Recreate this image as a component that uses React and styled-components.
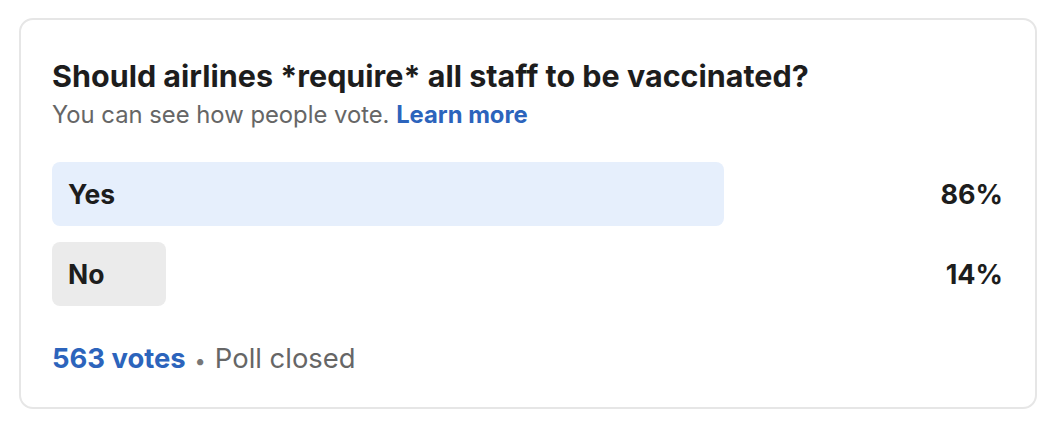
import React from 'react';
import styled, { createGlobalStyle } from 'styled-components';

const GlobalStyle = createGlobalStyle`
    body {
        margin: 0;
        background: #ffffff;
        font-family: Inter, "Liberation Sans", Arial, sans-serif;
    }
`

const Page = styled.div`
    padding: 18px 19px;
`

const Card = styled.div`
    box-sizing: border-box;
    width: 1018px;
    height: 391px;
    border: 2px solid #e6e6e6;
    border-radius: 14px;
    padding: 38px 32px 0 31px;
`

const Title = styled.h2`
    margin: 0;
    font-size: 30.5px;
    line-height: 36px;
    font-weight: 700;
    color: #1d1d1d;
`

const Subtitle = styled.p`
    margin: 6px 0 0;
    font-size: 23.8px;
    line-height: 30px;
    color: #666666;
`

const Link = styled.span`
    color: #2c64bc;
    font-weight: 700;
`

const Options = styled.div`
    margin-top: 32px;
    display: flex;
    flex-direction: column;
    gap: 16px;
`

const Row = styled.div`
    display: grid;
    grid-template-columns: 781px 1fr;
    align-items: center;
`

const Bar = styled.div`
    box-sizing: border-box;
    height: 64px;
    border-radius: 8px;
    background: ${p => p.$leading ? '#e6effc' : '#ebebeb'};
    display: flex;
    align-items: center;
    padding-left: 16px;
    font-size: 26.5px;
    font-weight: 700;
    color: #1d1d1d;
    white-space: nowrap;
`

const Percent = styled.div`
    text-align: right;
    font-size: 27px;
    font-weight: 700;
    color: #1d1d1d;
`

const Footer = styled.div`
    margin-top: 37px;
    font-size: 27.4px;
    line-height: 30px;
    color: #666666;
`

const Votes = styled.span`
    color: #2c64bc;
    font-weight: 700;
`

const Dot = styled.span`
    margin: 0 9px;
    font-size: 20px;
    color: #777777;
`

const options = [
    { label: 'Yes', pct: 86, width: 672, leading: true },
    { label: 'No', pct: 14, width: 114, leading: false },
]

export default function App() {
    return (
        <Page>
            <GlobalStyle />
            <Card>
                <Title>Should airlines *require* all staff to be vaccinated?</Title>
                <Subtitle>You can see how people vote. <Link>Learn more</Link></Subtitle>
                <Options>
                    {options.map(o => (
                        <Row key={o.label}>
                            <Bar $leading={o.leading} style={{ width: o.width }}>{o.label}</Bar>
                            <Percent>{o.pct}%</Percent>
                        </Row>
                    ))}
                </Options>
                <Footer><Votes>563 votes</Votes><Dot>•</Dot>Poll closed</Footer>
            </Card>
        </Page>
    );
}
